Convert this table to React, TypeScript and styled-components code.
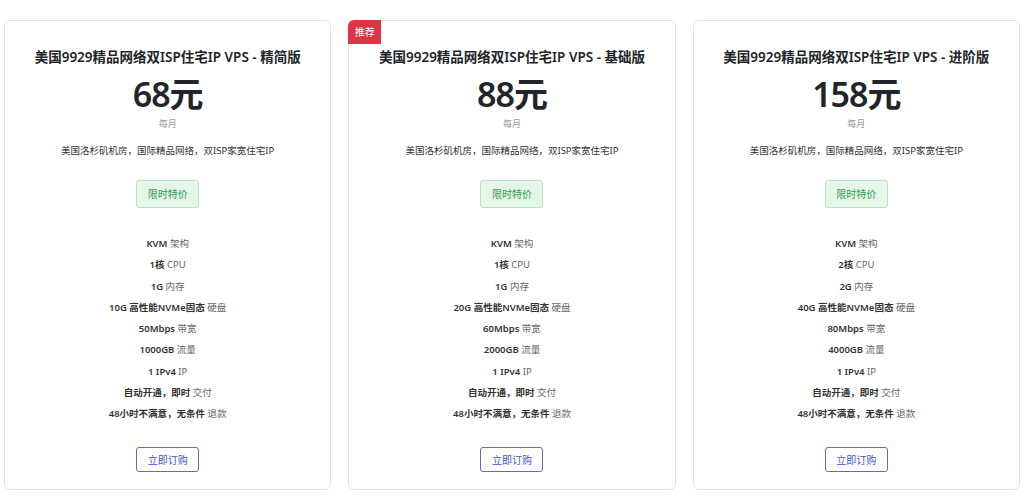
import React from 'react';
import styled, { createGlobalStyle } from 'styled-components';

type Feature = { strong: string; light: string };

type Plan = {
  name: string;
  price: string;
  recommended?: boolean;
  features: Feature[];
};

const common = (cpu: string, ram: string, disk: string, bw: string, traffic: string): Feature[] => [
  { strong: 'KVM', light: '架构' },
  { strong: cpu, light: 'CPU' },
  { strong: ram, light: '内存' },
  { strong: disk, light: '硬盘' },
  { strong: bw, light: '带宽' },
  { strong: traffic, light: '流量' },
  { strong: '1 IPv4', light: 'IP' },
  { strong: '自动开通，即时', light: '交付' },
  { strong: '48小时不满意，无条件', light: '退款' },
];

const plans: Plan[] = [
  {
    name: '美国9929精品网络双ISP住宅IP VPS - 精简版',
    price: '68元',
    features: common('1核', '1G', '10G 高性能NVMe固态', '50Mbps', '1000GB'),
  },
  {
    name: '美国9929精品网络双ISP住宅IP VPS - 基础版',
    price: '88元',
    recommended: true,
    features: common('1核', '1G', '20G 高性能NVMe固态', '60Mbps', '2000GB'),
  },
  {
    name: '美国9929精品网络双ISP住宅IP VPS - 进阶版',
    price: '158元',
    features: common('2核', '2G', '40G 高性能NVMe固态', '80Mbps', '4000GB'),
  },
];

export default function App() {
  return (
    <>
      <GlobalStyle />
      <Row>
        {plans.map((plan) => (
          <Card key={plan.name}>
            {plan.recommended && <Ribbon>推荐</Ribbon>}
            <Title>{plan.name}</Title>
            <Price>{plan.price}</Price>
            <Period>每月</Period>
            <Desc>美国洛杉矶机房，国际精品网络，双ISP家宽住宅IP</Desc>
            <Tag>限时特价</Tag>
            <FeatureList>
              {plan.features.map((f) => (
                <li key={f.light + f.strong}>
                  <b>{f.strong}</b> <span>{f.light}</span>
                </li>
              ))}
            </FeatureList>
            <OrderButton>立即订购</OrderButton>
          </Card>
        ))}
      </Row>
    </>
  );
}

const GlobalStyle = createGlobalStyle`
  html, body {
    margin: 0;
    padding: 0;
    background: #fff;
  }
  body {
    font-family: "Noto Sans", "Noto Sans CJK SC", sans-serif;
    color: #212529;
  }
`;

const Row = styled.div`
  display: grid;
  grid-template-columns: repeat(3, 1fr);
  gap: 17px;
  padding: 20px 4px 0 4px;
`;

const Card = styled.div`
  position: relative;
  display: flex;
  flex-direction: column;
  align-items: center;
  height: 470px;
  box-sizing: border-box;
  padding-top: 26px;
  border: 1px solid #e3e3e3;
  border-radius: 6px;
  background: #fff;
  text-align: center;
`;

const Ribbon = styled.div`
  position: absolute;
  top: -1px;
  left: -1px;
  width: 33px;
  height: 24px;
  line-height: 24px;
  background: #dc3545;
  color: #fff;
  font-size: 10px;
  border-top-left-radius: 6px;
`;

const Title = styled.h3`
  margin: 0;
  font-size: 13.5px;
  line-height: 20px;
  font-weight: 600;
`;

const Price = styled.div`
  margin-top: 7px;
  font-size: 34px;
  line-height: 40px;
  font-weight: 600;
  letter-spacing: -1px;
`;

const Period = styled.div`
  margin-top: 3px;
  font-size: 9px;
  line-height: 14px;
  color: #999;
`;

const Desc = styled.p`
  margin: 13px 0 0;
  font-size: 9.5px;
  line-height: 14px;
  color: #333;
`;

const Tag = styled.div`
  margin-top: 22px;
  width: 63px;
  height: 28px;
  box-sizing: border-box;
  line-height: 26px;
  font-size: 10px;
  color: #2f9e4f;
  background: #e6f5e9;
  border: 1px solid #b9e2c3;
  border-radius: 3px;
`;

const FeatureList = styled.ul`
  list-style: none;
  margin: 25px 0 0;
  padding: 0;
  font-size: 9.5px;
  line-height: 21.3px;

  b {
    font-weight: 600;
    color: #333;
  }
  span {
    color: #666;
  }
`;

const OrderButton = styled.button`
  margin-top: 22px;
  width: 63px;
  height: 25px;
  padding: 0;
  font-family: inherit;
  font-size: 10px;
  color: #3f51c4;
  background: #fff;
  border: 1px solid #5a6ad6;
  border-radius: 3px;
  cursor: pointer;
`;
